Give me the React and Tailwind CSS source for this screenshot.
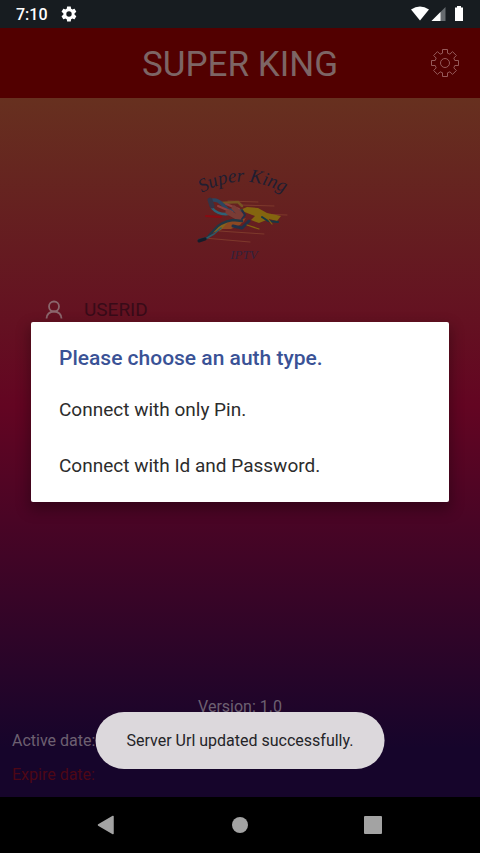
import { useState } from "react";

function StatusBar() {
  return (
    <div className="flex h-7 shrink-0 items-center justify-between bg-[#171c20] px-4 text-white">
      <div className="flex items-center gap-3">
        <span className="pt-0.5 text-base font-medium leading-7">7:10</span>
        <svg viewBox="0 0 24 24" className="size-[18px]" fill="currentColor" aria-hidden="true">
          <path d="M19.400 13a7.500 7.500 0 0 0 0-2l2.100-1.700c.2-.1.200-.4.100-.6l-2-3.500c-.1-.2-.4-.3-.6-.2l-2.500 1c-.5-.4-1.100-.7-1.700-1l-.4-2.600c0-.3-.2-.4-.5-.4h-4c-.2 0-.4.200-.5.400L9 5.100c-.6.200-1.200.600-1.700 1L4.800 5c-.2-.1-.5 0-.6.200l-2 3.500c-.1.200-.1.500.1.600L4.500 11a7.500 7.500 0 0 0 0 2l-2.200 1.700c-.2.100-.2.400-.1.600l2 3.500c.1.200.4.300.6.200l2.500-1c.5.400 1.100.700 1.700 1l.4 2.600c0 .200.2.400.5.400h4c.3 0 .5-.2.500-.4l.4-2.600c.6-.3 1.200-.6 1.700-1l2.500 1c.2.100.5 0 .6-.2l2-3.500c.1-.2.100-.5-.1-.600zM12 15.600a3.600 3.600 0 1 1 0-7.200 3.600 3.600 0 0 1 0 7.200z" />
        </svg>
      </div>
      <svg viewBox="0 0 54 18" className="h-[18px] w-[54px]" aria-hidden="true">
        <path d="M1 4.500Q10-1.500 19 4.500L10 15.500z" fill="#fff" />
        <path d="M35.500 2v14h-14z" fill="#666b6f" />
        <path d="M30.500 7v9h-9z" fill="#fff" />
        <path d="M47 1h4v1.500h2V16h-8V2.500h2z" fill="#fff" />
      </svg>
    </div>
  );
}

function Logo() {
  return (
    <svg viewBox="0 0 96 104" className="h-[104px] w-24 overflow-visible" role="img" aria-label="Super King IPTV">
      <defs>
        <path id="logo-arc" d="M10 33Q50 9 98 36" />
      </defs>
      <text fill="#201e31" fontSize="19" fontStyle="italic" fontFamily="'Liberation Serif', serif">
        <textPath href="#logo-arc">Super King</textPath>
      </text>
      <g fill="none" strokeLinecap="round">
        <path d="M36 41L66 42M48 45L82 46M60 54L95 55M27 71L72 74M12 78L58 82" stroke="#84402f" strokeWidth="0.800" />
        <path d="M14 56L29 57" stroke="#8b0b12" strokeWidth="1.800" />
        <path d="M29 43L46 42L50 46" stroke="#765422" strokeWidth="2.500" />
        <path d="M18 41Q24 38 30 44L36 50L48 51" stroke="#2c4560" strokeWidth="3.500" />
        <path d="M20 48Q26 55 36 54" stroke="#2e6275" strokeWidth="2.500" />
        <path d="M18 40L20 46" stroke="#353345" strokeWidth="5" />
        <path d="M26 46L40 52M34 44L47 49" stroke="#8b4040" strokeWidth="2" />
        <path d="M36 52L50 60M42 48L50 56" stroke="#793c35" strokeWidth="5" />
      </g>
      <path d="M48 50l7-3 11 1 9 5 14 3-4 5-8-2-10 4-8-3 4-4-8-3z" fill="#84650f" />
      <path d="M46 61l8-3-6 7-9 4-12 0-8 4 6-7 8-5z" fill="#8b4822" />
      <path d="M24 68l12-6-7 8-9 3z" fill="#85651c" />
      <g fill="none" strokeLinecap="round" strokeLinejoin="round">
        <path d="M7 80L15 78L22 70Q28 62 41 60L50 61" stroke="#213744" strokeWidth="2.500" />
        <path d="M29 68L22 74L15 78" stroke="#2e5967" strokeWidth="1.500" />
        <path d="M41 66L50 68L57 61" stroke="#223047" strokeWidth="3" />
        <path d="M50 50L53 55L50 59" stroke="#223047" strokeWidth="2" />
        <path d="M70 57L76 61L86 62" stroke="#173845" strokeWidth="2" />
        <path d="M7 81L13 79" stroke="#151c29" strokeWidth="3" />
        <path d="M55 65L67 69M76 59L80 64" stroke="#84650f" strokeWidth="1.200" />
      </g>
      <text x="52" y="99" textAnchor="middle" fill="#33213b" fontSize="13" fontStyle="italic" fontFamily="'Liberation Serif', serif">IPTV</text>
    </svg>
  );
}

function Header() {
  return (
    <header className="grid h-[70px] shrink-0 grid-cols-[1fr_auto_1fr] items-center bg-[#520000] px-5 text-[#7d6565]">
      <h1 className="col-start-2 pt-1 text-[35px] leading-[66px]">SUPER KING</h1>
      <button type="button" aria-label="Settings" className="justify-self-end">
        <svg viewBox="0 0 30 30" className="size-[30px]" fill="none" stroke="#965a5a" strokeWidth="1" strokeLinejoin="round">
          <path d="M12.500 1.500h5v3.700l2.400 1 2.600-2.600 3.900 3.900-2.600 2.600 1 2.400h3.700v5h-3.700l-1 2.400 2.600 2.600-3.900 3.900-2.600-2.600-2.400 1v3.700h-5v-3.700l-2.400-1-2.600 2.600-3.900-3.900 2.600-2.600-1-2.400H1.500v-5h3.700l1-2.400-2.600-2.600 3.900-3.900 2.600 2.600 2.400-1z" />
          <circle cx="15" cy="15" r="4.500" />
        </svg>
      </button>
    </header>
  );
}

function AuthDialog({ onChoose }) {
  return (
    <section role="dialog" aria-labelledby="auth-title" className="absolute inset-x-[31px] top-56 rounded-xs bg-white px-7 pb-2 pt-5 shadow-[0_6px_14px_2px_rgba(0,0,0,0.3)]">
      <h2 id="auth-title" className="text-[21px] font-medium leading-8 text-[#3a5296]">Please choose an auth type.</h2>
      <div className="mt-2 flex flex-col text-[19px] text-[#2c2c2c]">
        <button type="button" className="h-14 text-left" onClick={() => onChoose("pin")}>Connect with only Pin.</button>
        <button type="button" className="h-14 text-left" onClick={() => onChoose("password")}>Connect with Id and Password.</button>
      </div>
    </section>
  );
}

function NavigationBar() {
  return (
    <nav className="grid h-14 shrink-0 grid-cols-[1fr_56px_1fr] items-center bg-black px-20 text-[#a3a3a3]">
      <button type="button" aria-label="Back" className="ml-4 justify-self-start">
        <svg viewBox="0 0 20 20" className="size-5" fill="currentColor" stroke="currentColor" strokeWidth="1.500" strokeLinejoin="round"><path d="M2.500 10L17 1.500v17z" /></svg>
      </button>
      <button type="button" aria-label="Home" className="justify-self-center">
        <span className="block size-4 rounded-full bg-current" />
      </button>
      <button type="button" aria-label="Overview" className="mr-[18px] justify-self-end">
        <span className="block size-[18px] rounded-[1px] bg-current" />
      </button>
    </nav>
  );
}

export default function App() {
  const [authType, setAuthType] = useState("");
  return (
    <div className="flex min-h-screen flex-col overflow-hidden font-[Roboto,sans-serif]">
      <StatusBar />
      <Header />
      <main data-auth={authType} className="relative flex grow flex-col bg-[linear-gradient(to_bottom,#67301f_0%,#630522_44%,#16052b_93%,#16052b_100%)]">
        <div className="flex justify-center pt-[62px]">
          <Logo />
        </div>
        <label className="mt-8 flex items-center gap-5 pl-11">
          <svg viewBox="0 0 20 20" className="size-5" fill="none" stroke="#8b666c" strokeWidth="1.800" aria-label="User ID">
            <circle cx="10" cy="6.500" r="5" />
            <path d="M2.500 18.500c0-4 3-7 7.500-7s7.500 3 7.500 7" />
          </svg>
          <input name="userid" placeholder="USERID" className="w-64 bg-transparent text-[19px] leading-7 outline-none placeholder:text-[#380b18]" />
        </label>
        <footer className="mt-auto px-3 text-base text-[#6d6071]">
          <p className="text-center leading-8">Version: 1.0</p>
          <p className="mt-0.5 leading-8">Active date:</p>
          <p className="pb-1 leading-9 text-[#4d0716]">Expire date:</p>
        </footer>
        <AuthDialog onChoose={setAuthType} />
        <div role="status" className="absolute bottom-7 left-1/2 -translate-x-1/2 whitespace-nowrap rounded-full bg-[#dcd8dc] px-[31px] text-base leading-[57px] text-[#242428]">
          Server Url updated successfully.
        </div>
      </main>
      <NavigationBar />
    </div>
  );
}
